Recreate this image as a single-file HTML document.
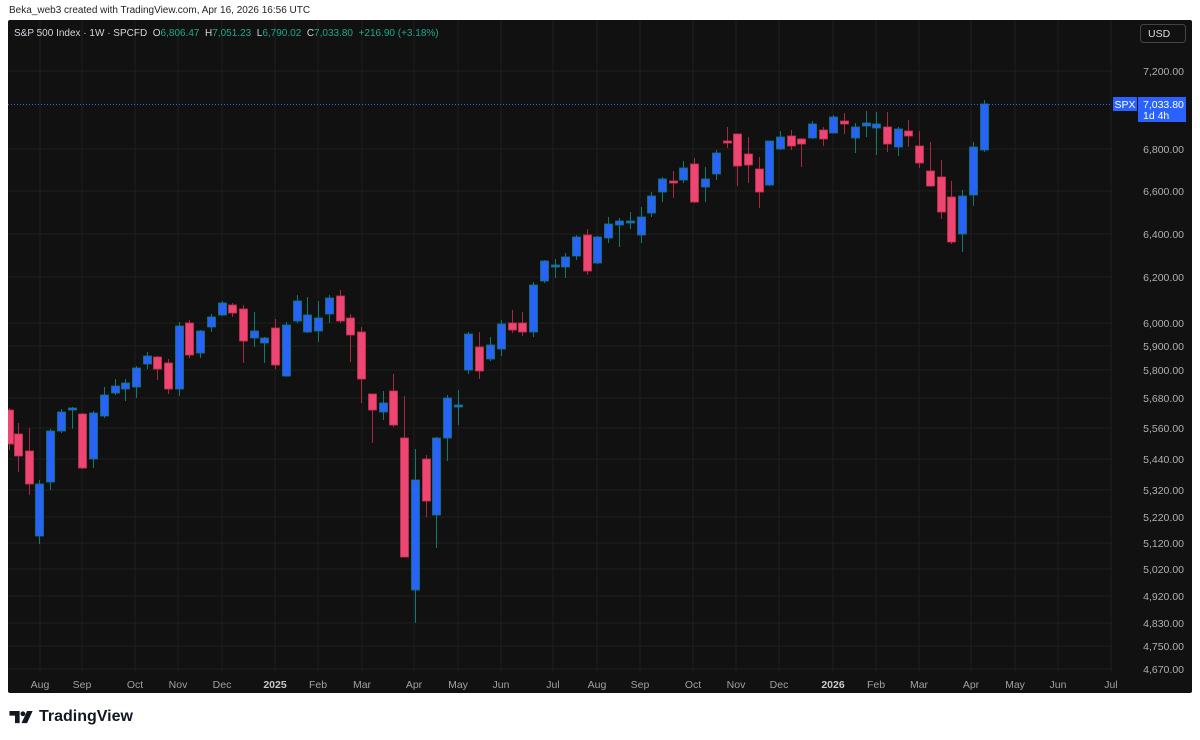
<!DOCTYPE html>
<html><head><meta charset="utf-8">
<style>
html,body{margin:0;padding:0;background:#fff;width:1200px;height:740px;overflow:hidden;font-family:"Liberation Sans",sans-serif}
#hdr{position:absolute;left:9px;top:5px;font-size:10px;color:#222}
#chart{position:absolute;left:8px;top:20px;width:1184px;height:673px;background:#111111;border-radius:2px}
svg{position:absolute;left:0;top:0}
#logo{position:absolute;left:9px;top:708px;font-size:16px;font-weight:bold;color:#131722;display:flex;align-items:center}
</style></head><body>
<div id="hdr">Beka_web3 created with TradingView.com, Apr 16, 2026 16:56 UTC</div>
<div id="chart"></div>
<svg id="s" width="1200" height="740" xmlns="http://www.w3.org/2000/svg" font-family="Liberation Sans, sans-serif">
</svg>
<div id="logo"><svg width="25" height="13" viewBox="0 0 26 14" style="position:static;margin-right:5px"><path d="M0 0H11V13H6V5H0Z" fill="#131722"/><circle cx="14.5" cy="3" r="2.6" fill="#131722"/><path d="M19 0H25L19 13H13Z" fill="#131722"/></svg>TradingView</div>
<script>
var s=document.getElementById('s'),h='';
var py=[71,149,191,234,277,323,346,370,398,428,459,490,517,543,569,596,623,646,669];
var pl=['7,200.00','6,800.00','6,600.00','6,400.00','6,200.00','6,000.00','5,900.00','5,800.00','5,680.00','5,560.00','5,440.00','5,320.00','5,220.00','5,120.00','5,020.00','4,920.00','4,830.00','4,750.00','4,670.00'];
py.forEach(function(y){h+='<line x1="8" x2="1112" y1="'+y+'" y2="'+y+'" stroke="#1f1f1f" stroke-width="1"/>';});
var mx=[40,82,135,178,222,275,318,362,414,458,501,553,597,640,693,736,779,833,876,919,971,1015,1058,1111];
var ml=['Aug','Sep','Oct','Nov','Dec','2025','Feb','Mar','Apr','May','Jun','Jul','Aug','Sep','Oct','Nov','Dec','2026','Feb','Mar','Apr','May','Jun','Jul'];
mx.forEach(function(x){h+='<line x1="'+x+'" x2="'+x+'" y1="20" y2="671" stroke="#1f1f1f" stroke-width="1"/>';});
ml.forEach(function(t,i){var b=(t=='2025'||t=='2026');h+='<text x="'+mx[i]+'" y="688" fill="'+(b?'#c8c8c8':'#a0a0a0')+'" font-size="10.5" text-anchor="middle"'+(b?' font-weight="bold"':'')+'>'+t+'</text>';});
pl.forEach(function(t,i){h+='<text x="1184" y="'+(py[i]+4)+'" fill="#b0b0b0" font-size="10.5" text-anchor="end">'+t+'</text>';});
var c=[[9,408,410,444,450,1],[18,423,434,456,472,1],[29,428,451,484,495,1],[39,480,484,536,544,0],[50,429,431,482,490,0],[61,409,412,431,433,0],[72,407,408,410,429,0],[82,413,414,468,469,1],[93,411,413,459,468,0],[104,387,395,416,418,0],[115,379,386,393,395,0],[125,379,383,389,401,0],[136,366,368,387,398,0],[147,352,356,364,369,0],[157,356,357,369,380,1],[168,359,363,389,394,1],[179,322,326,389,396,0],[189,320,323,355,358,1],[200,330,331,353,358,0],[211,314,317,327,332,0],[222,301,303,315,316,0],[232,303,305,313,317,1],[243,305,309,341,363,1],[254,312,331,338,347,0],[264,337,338,343,363,0],[275,319,328,365,369,1],[286,322,325,376,377,0],[297,295,301,321,323,0],[307,297,315,332,333,0],[318,301,318,331,342,0],[329,295,298,314,323,0],[340,290,296,321,323,1],[350,314,318,335,362,1],[361,327,332,379,403,1],[372,394,394,410,443,1],[383,391,403,412,420,0],[393,374,391,425,427,1],[404,396,438,557,557,1],[415,449,480,590,623,0],[426,455,459,501,517,1],[436,437,438,515,548,0],[447,395,398,438,461,0],[458,390,405,407,425,0],[468,332,334,370,374,0],[479,332,347,371,379,1],[490,337,345,359,361,0],[501,320,324,349,356,0],[512,310,323,330,333,1],[522,312,323,332,336,1],[533,282,285,332,337,0],[544,260,261,281,283,0],[555,259,265,267,278,0],[565,253,257,267,278,0],[576,235,237,256,260,0],[587,229,235,271,275,1],[597,236,237,263,264,0],[608,217,224,238,243,0],[619,218,221,225,247,0],[630,212,221,223,229,0],[641,207,217,235,243,0],[651,192,196,213,217,0],[662,177,179,192,202,0],[673,171,181,183,198,1],[683,161,168,180,183,0],[694,158,164,202,203,1],[705,167,179,187,202,0],[716,150,153,174,180,0],[727,127,141,143,148,1],[737,134,134,166,186,1],[748,137,154,165,183,1],[759,157,169,192,208,1],[769,141,141,185,186,0],[780,131,137,149,150,0],[791,130,136,146,150,1],[801,138,139,144,167,1],[812,121,124,138,139,0],[823,127,130,139,146,1],[833,115,117,133,133,0],[844,113,121,124,134,1],[855,123,127,138,153,0],[866,111,123,126,137,0],[876,112,124,128,155,0],[887,112,127,144,152,1],[898,127,129,147,156,0],[908,120,131,136,147,1],[919,131,146,163,168,1],[930,142,171,186,187,1],[941,160,177,212,219,1],[951,181,197,242,244,1],[962,190,196,234,252,0],[973,142,147,195,206,0],[984,100,104,150,152,0]];
c.forEach(function(d){var r=d[5];var wk=r?'#a8283f':'#127a6c';var bf=r?'#ee4673':'#2962f6';var bs=r?'#c8304f':'#0f7a78';
h+='<line x1="'+d[0]+'.5" x2="'+d[0]+'.5" y1="'+d[1]+'" y2="'+d[4]+'" stroke="'+wk+'" stroke-width="1"/>';
var hh=Math.max(1.5,d[3]-d[2]);h+='<rect x="'+(d[0]-3.5)+'" y="'+d[2]+'" width="8" height="'+hh+'" fill="'+bf+'" stroke="'+bs+'" stroke-width="0.8"/>';});
h+='<rect x="0" y="20" width="8" height="673" fill="#fff"/>';
h+='<line x1="8" x2="1112" y1="104.5" y2="104.5" stroke="#2962ff" stroke-width="1" stroke-dasharray="1,2"/>';
h+='<rect x="1113" y="97" width="24" height="14" fill="#2962ff"/><text x="1125" y="108" fill="#fff" font-size="10.5" text-anchor="middle">SPX</text>';
h+='<rect x="1138" y="97" width="48" height="25" fill="#2962ff"/><text x="1143" y="108" fill="#fff" font-size="10.5">7,033.80</text><text x="1143" y="119" fill="#fff" font-size="10.5">1d 4h</text>';
h+='<rect x="1140.5" y="24.5" width="45" height="18" rx="3" fill="#111" stroke="#444"/><text x="1148" y="37" fill="#ddd" font-size="10.5">USD</text>';
h+='<text x="14" y="36" font-size="10" fill="#d1d4dc" style="white-space:pre" xml:space="preserve">S&amp;P 500 Index · 1W · SPCFD  O<tspan fill="#1ea888">6,806.47</tspan>  H<tspan fill="#1ea888">7,051.23</tspan>  L<tspan fill="#1ea888">6,790.02</tspan>  C<tspan fill="#1ea888">7,033.80</tspan>  <tspan fill="#1ea888">+216.90 (+3.18%)</tspan></text>';
s.innerHTML=h;
</script>
</body></html>
